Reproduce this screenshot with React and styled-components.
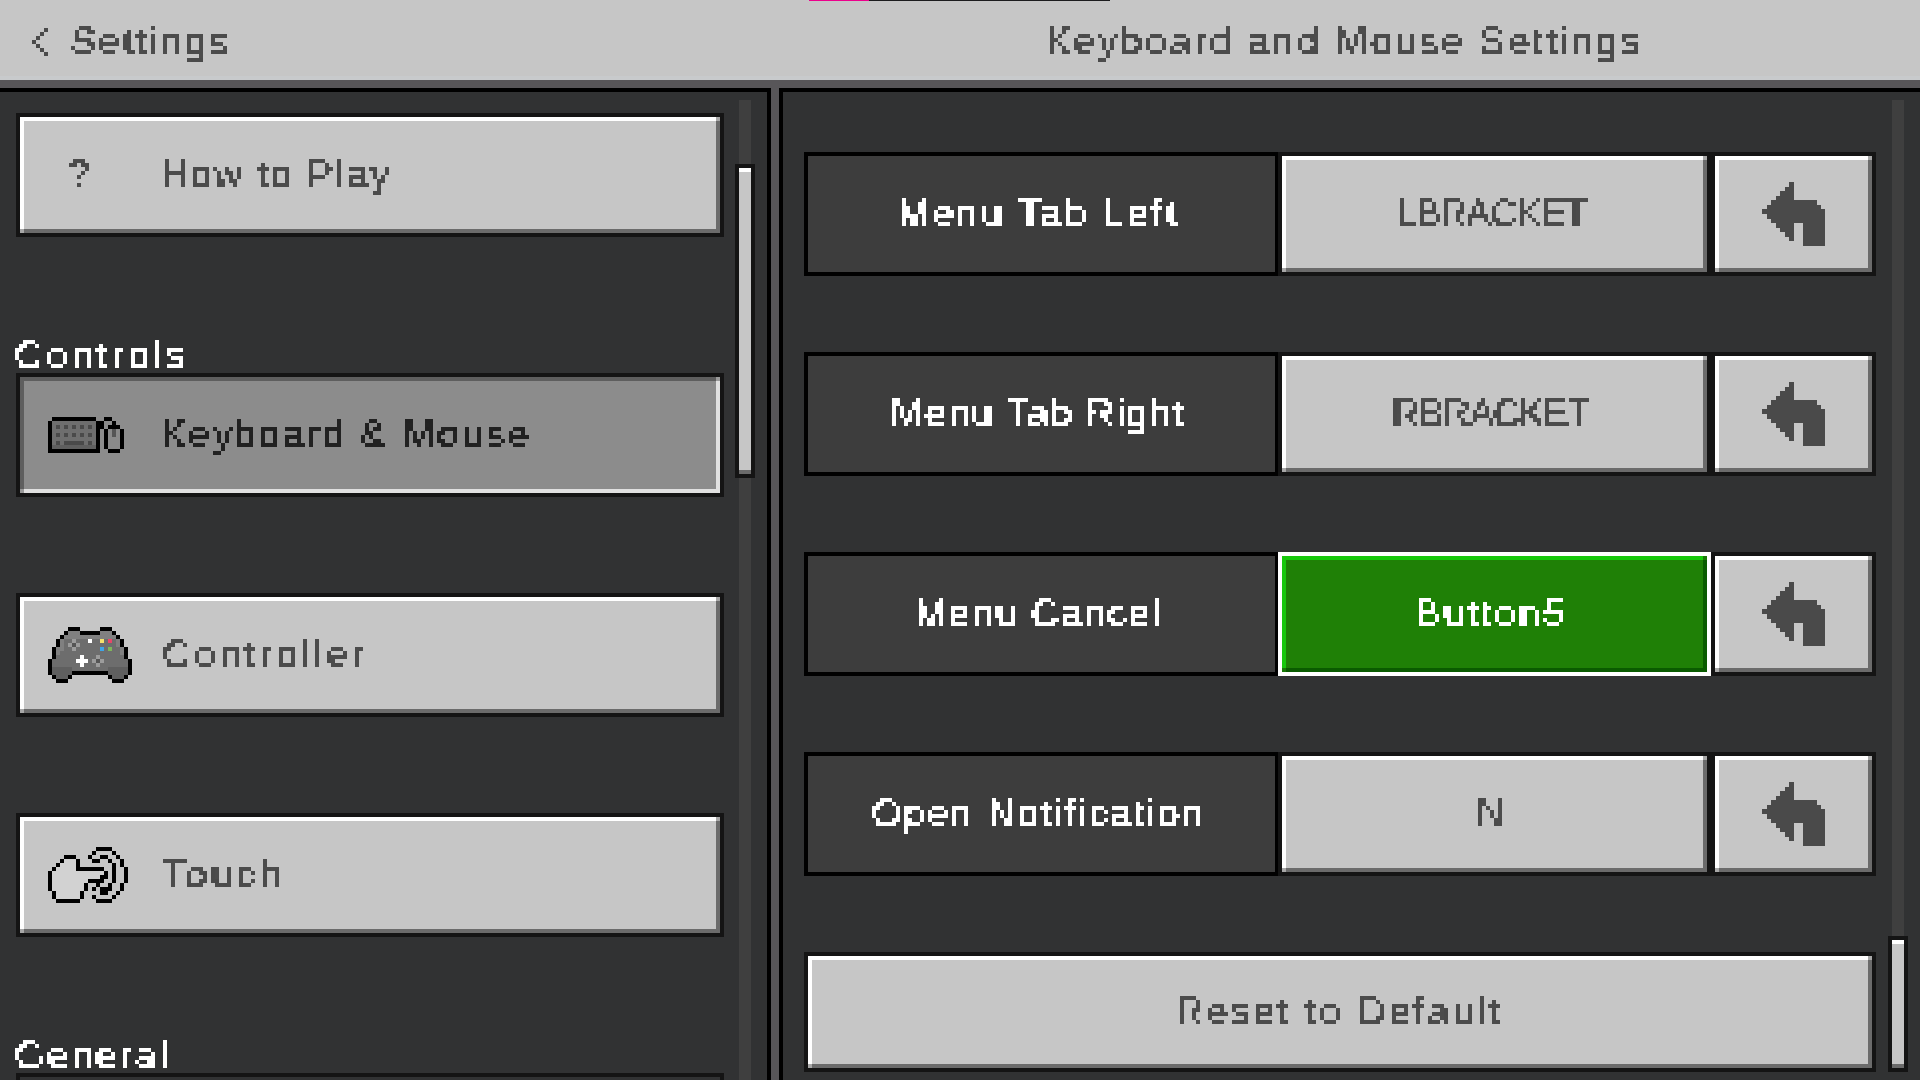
import React from 'react';
import styled, { createGlobalStyle, css } from 'styled-components';

const GlobalStyle = createGlobalStyle`
    html, body {
        margin: 0;
        padding: 0;
        width: 1920px;
        height: 1080px;
        overflow: hidden;
        background: #313233;
    }
    * {
        box-sizing: border-box;
    }
`;

const tones = {
    stone: { fill: '#c6c6c6', high: '#ffffff', low: '#6b6b6b', corner: '#a8a8a8', text: '#4c4c4c' },
    pressed: { fill: '#8c8c8c', high: '#5e5e5e', low: '#e0e0e0', corner: '#9a9a9a', text: '#222222' },
    green: { fill: '#1f8006', high: '#17c80b', low: '#0a5b00', corner: '#197a07', text: '#ffffff' }
};

const bevel = css`
    position: relative;
    background: ${props => tones[props.$tone || 'stone'].fill};
    box-shadow:
        inset 4px 4px 0 ${props => tones[props.$tone || 'stone'].high},
        inset -4px -4px 0 ${props => tones[props.$tone || 'stone'].low};
    &::before,
    &::after {
        content: '';
        position: absolute;
        width: 4px;
        height: 4px;
        background: ${props => tones[props.$tone || 'stone'].corner};
    }
    &::before {
        left: 0;
        bottom: 0;
    }
    &::after {
        right: 0;
        top: 0;
    }
`;

const Page = styled.div`
    position: relative;
    width: 1920px;
    height: 1080px;
    display: flex;
    flex-direction: column;
    overflow: hidden;
`;

const Progress = styled.div`
    position: absolute;
    top: 0;
    left: 809px;
    width: 301px;
    height: 1px;
    background: linear-gradient(to right, #ec008c 60px, #1c1c1e 60px);
`;

const Header = styled.header`
    height: 88px;
    flex: none;
    display: flex;
    padding-top: 3px;
    background: #c6c6c6;
    border-bottom: 8px solid #585659;
    box-shadow: inset 0 -4px 0 #c8cacc;
`;

const BackLink = styled.div`
    width: 768px;
    padding-left: 32px;
    display: flex;
    align-items: center;
    gap: 22px;
`;

const HeaderTitle = styled.div`
    flex: 1;
    display: flex;
    align-items: center;
    justify-content: center;
`;

const Body = styled.main`
    flex: 1;
    min-height: 0;
    display: flex;
    gap: 8px;
    background: #585659;
`;

const LeftPane = styled.section`
    width: 771px;
    flex: none;
    display: flex;
    padding: 8px 0 0 16px;
    background: #313233;
    border-top: 4px solid #000;
    border-right: 4px solid #000;
    overflow: hidden;
`;

const RightPane = styled.section`
    flex: 1;
    display: flex;
    padding: 8px 12px 0 21px;
    background: #313233;
    border-top: 4px solid #000;
    border-left: 4px solid #000;
    overflow: hidden;
`;

const MenuList = styled.div`
    width: 708px;
    flex: none;
    margin-top: 13px;
    display: flex;
    flex-direction: column;
    gap: 96px;
`;

const MenuGroup = styled.div`
    display: flex;
    flex-direction: column;
`;

const GroupTitle = styled.div`
    height: 40px;
    padding-top: 6px;
    margin-left: -2px;
    display: flex;
    align-items: center;
    flex: none;
`;

const MenuButton = styled.div`
    height: 124px;
    flex: none;
    border: 4px solid #141414;
    display: flex;
`;

const MenuFace = styled.div`
    ${bevel}
    flex: 1;
    display: flex;
    align-items: center;
    padding-left: 28px;
`;

const IconSlot = styled.div`
    width: ${props => props.$width || 112}px;
    flex: none;
    display: flex;
    align-items: center;
`;

const QuestionMark = styled.div`
    margin-left: 20px;
`;

const Track = styled.div`
    position: relative;
    width: 12px;
    flex: none;
    background: #3f3f3f;
    margin-left: ${props => props.$gap}px;
    height: ${props => props.$height};
`;

const Thumb = styled.div`
    position: absolute;
    left: -4px;
    width: 20px;
    top: ${props => props.$top}px;
    height: ${props => props.$size}px;
    border: 4px solid #141414;
    background: #c6c6c6;
    box-shadow:
        inset 0 4px 0 #ffffff,
        inset 0 -4px 0 #6b6b6b;
`;

const BindingList = styled.div`
    width: 1072px;
    flex: none;
    margin-top: 52px;
    display: flex;
    flex-direction: column;
    gap: 76px;
`;

const BindingRow = styled.div`
    height: 124px;
    display: flex;
`;

const BindingName = styled.div`
    width: 475px;
    flex: none;
    padding-right: 7px;
    background: #3d3d3d;
    border: 4px solid #000;
    display: flex;
    align-items: center;
    justify-content: center;
`;

const KeyFrame = styled.div`
    position: relative;
    width: 433px;
    margin-left: -1px;
    flex: none;
    display: flex;
    border: 4px solid ${props => (props.$active ? '#ffffff' : '#141414')};
`;

const BackFrame = styled.div`
    width: 165px;
    flex: none;
    display: flex;
    border: 4px solid #141414;
`;

const Face = styled.div`
    ${bevel}
    flex: 1;
    display: flex;
    align-items: center;
    justify-content: center;
    padding-right: ${props => props.$nudge || 0}px;
`;

const ResetFrame = styled.div`
    height: 120px;
    flex: none;
    display: flex;
    border: 4px solid #141414;
`;

const PixelText = styled.span`
    display: inline-block;
    margin-top: -2px;
    font-family: "Liberation Sans", Arial, sans-serif;
    font-size: 38px;
    line-height: 48px;
    letter-spacing: ${props => props.$spacing}px;
    -webkit-text-stroke: 0.45px ${props => props.$color || '#4c4c4c'};
    white-space: pre;
    color: ${props => props.$color || '#4c4c4c'};
    filter: url(#pixelate);
`;

const FilterDefs = styled.svg`
    position: absolute;
    width: 0;
    height: 0;
`;

const PixelSvg = styled.svg`
    display: block;
    flex: none;
    shape-rendering: crispEdges;
`;

const palette = {
    K: '#000000',
    g: '#6e6e6e',
    d: '#4a4a4a',
    D: '#5f5f5f',
    m: '#8a8a8a',
    l: '#808080',
    f: '#6d6d6d',
    s: '#5f5f5f',
    e: '#9c9c9c',
    c: '#555555',
    W: '#ffffff',
    Y: '#f5e26b',
    R: '#e8476a',
    B: '#3ea6e8',
    G: '#7fb65a',
    h: '#d2d2d2',
    A: '#4a4a4a'
};

// draws a list of same length strings as a pixel map, one char per cell
const PixelIcon = ({ rows, cell = 4 }) => {
    const cols = rows[0].length;
    return (
        <PixelSvg
            width={cols * cell}
            height={rows.length * cell}
            viewBox={`0 0 ${cols} ${rows.length}`}
        >
            {rows.map((row, y) =>
                row.split('').map((ch, x) =>
                    palette[ch] ? (
                        <rect key={`${x}-${y}`} x={x} y={y} width="1.02" height="1.02" fill={palette[ch]} />
                    ) : null
                )
            )}
        </PixelSvg>
    );
};

const chevron = [
    '...A',
    '..A.',
    '.A..',
    'A...',
    '.A..',
    '..A.',
    '...A'
];

const keyboardMouse = [
    '.KKKKKKKKKKK..KK...',
    'KgggggggggggKK..K..',
    'KgdgdgdgdgdgKK.KKK.',
    'KgggggggggggK.KmcmK',
    'KgdgdgdgdgdgK.KmcmK',
    'KgggggggggggK.KmmmK',
    'KgdgdddddgdgK.KmmmK',
    'KDDDDDDDDDDDK.KmmmK',
    'KKKKKKKKKKKKK..KKK.'
];

const gamepad = [
    '.....KKK.....KKK.....',
    '....KlllKKKKKlllK....',
    '...KlllllllllllllK...',
    '..KlffefffWffYfRflK..',
    '..Klfece' + 'f'.repeat(9) + 'lK..',
    '.KllffeffffffBfGfflK.',
    '.Kl' + 'f'.repeat(15) + 'lK.',
    '.KffffffWfffeffffffK.',
    'KffffffWWWfeceffffffK',
    'KfffffffWfffefffffffK',
    'KsssssfffffffffsssssK',
    'KsssssKKKKKKKKKsssssK',
    '.KsssK.........KsssK.',
    '..KKK...........KKK..'
];

const touchHand = [
    '............KKKK....',
    '...........K....K...',
    '....KKK...K..KK..K..',
    '...KhhhK...KK..K..K.',
    '..KhhhhK........K.K.',
    '.KhhhhhKKKKKKK..K..K',
    'KhhhhhhhhhhhhhK.K..K',
    'KhhhhhhhhhhhhKK.K..K',
    'KhhhhhhhhhKKKK..K..K',
    'KhhhhhhhhK..K..K..K.',
    'KhhhhhhhhK.K.KKK..K.',
    '.KhhhhhhK....KK..K..',
    '.KhhhhhhK..K....K...',
    '..KKKKKK....KKKK....'
];

const undoArrow = [
    '......A.......',
    '.....AA.......',
    '....AAA.......',
    '...AAAA.......',
    '..AAAAAAAAAA..',
    '.AAAAAAAAAAAA.',
    'AAAAAAAAAAAAAA',
    '.AAAAAAAAAAAAA',
    '..AAAAAAAAAAAA',
    '...AAAA..AAAAA',
    '....AAA..AAAAA',
    '.....AA..AAAAA',
    '......A..AAAAA',
    '.........AAAAA'
];

// spacing is tuned per label, the source font is wider on lower case than on capitals
const bindings = [
    { name: 'Menu Tab Left', nameSpacing: 3.2, key: 'LBRACKET', keySpacing: -1.2 },
    { name: 'Menu Tab Right', nameSpacing: 2.1, key: 'RBRACKET', keySpacing: -1.2 },
    { name: 'Menu Cancel', nameSpacing: 2.2, key: 'Button5', keySpacing: 3.1, active: true },
    { name: 'Open Notification', nameSpacing: 2.5, key: 'N', keySpacing: 0 }
];

const App = () => (
    <Page>
        <GlobalStyle />
        <FilterDefs aria-hidden="true">
            <filter id="pixelate" x="0" y="0" width="1" height="1" colorInterpolationFilters="sRGB">
                <feFlood x="2" y="2" width="1" height="1" floodColor="#000" />
                <feComposite width="4" height="4" />
                <feTile result="grid" />
                <feComposite in="SourceGraphic" in2="grid" operator="in" />
                <feComponentTransfer>
                    <feFuncA type="discrete" tableValues="0 1 1" />
                </feComponentTransfer>
                <feMorphology operator="dilate" radius="1" result="dot" />
                <feOffset in="dot" dx="1" dy="0" result="right" />
                <feOffset in="dot" dx="0" dy="1" result="down" />
                <feOffset in="dot" dx="1" dy="1" result="both" />
                <feMerge>
                    <feMergeNode in="dot" />
                    <feMergeNode in="right" />
                    <feMergeNode in="down" />
                    <feMergeNode in="both" />
                </feMerge>
            </filter>
        </FilterDefs>
        <Progress />
        <Header>
            <BackLink>
                <PixelIcon rows={chevron} />
                <PixelText $spacing={2.8}>Settings</PixelText>
            </BackLink>
            <HeaderTitle>
                <PixelText $spacing={3.3}>Keyboard and Mouse Settings</PixelText>
            </HeaderTitle>
        </Header>
        <Body>
            <LeftPane>
                <MenuList>
                    <MenuButton>
                        <MenuFace>
                            <IconSlot>
                                <QuestionMark>
                                    <PixelText $spacing={0}>?</PixelText>
                                </QuestionMark>
                            </IconSlot>
                            <PixelText $spacing={2.6}>How to Play</PixelText>
                        </MenuFace>
                    </MenuButton>
                    <MenuGroup>
                        <GroupTitle>
                            <PixelText $color="#ffffff" $spacing={4.2}>Controls</PixelText>
                        </GroupTitle>
                        <MenuButton>
                            <MenuFace $tone="pressed">
                                <IconSlot>
                                    <PixelIcon rows={keyboardMouse} />
                                </IconSlot>
                                <PixelText $color="#222222" $spacing={3}>Keyboard &amp; Mouse</PixelText>
                            </MenuFace>
                        </MenuButton>
                    </MenuGroup>
                    <MenuButton>
                        <MenuFace>
                            <IconSlot $width={114}>
                                <PixelIcon rows={gamepad} />
                            </IconSlot>
                            <PixelText $spacing={4.2}>Controller</PixelText>
                        </MenuFace>
                    </MenuButton>
                    <MenuButton>
                        <MenuFace>
                            <IconSlot $width={114}>
                                <PixelIcon rows={touchHand} />
                            </IconSlot>
                            <PixelText $spacing={4.1}>Touch</PixelText>
                        </MenuFace>
                    </MenuButton>
                    <MenuGroup>
                        <GroupTitle>
                            <PixelText $color="#ffffff" $spacing={3}>General</PixelText>
                        </GroupTitle>
                        <MenuButton />
                    </MenuGroup>
                </MenuList>
                <Track $gap={15} $height="100%">
                    <Thumb $top={64} $size={314} />
                </Track>
            </LeftPane>
            <RightPane>
                <BindingList>
                    {bindings.map(item => (
                        <BindingRow key={item.name}>
                            <BindingName>
                                <PixelText $color="#ffffff" $spacing={item.nameSpacing}>{item.name}</PixelText>
                            </BindingName>
                            <KeyFrame $active={item.active}>
                                <Face $tone={item.active ? 'green' : 'stone'} $nudge={8}>
                                    <PixelText $color={item.active ? '#ffffff' : '#4c4c4c'} $spacing={item.keySpacing}>
                                        {item.key}
                                    </PixelText>
                                </Face>
                            </KeyFrame>
                            <BackFrame>
                                <Face>
                                    <PixelIcon rows={undoArrow} cell={4.57} />
                                </Face>
                            </BackFrame>
                        </BindingRow>
                    ))}
                    <ResetFrame>
                        <Face $nudge={3}>
                            <PixelText $spacing={3.4}>Reset to Default</PixelText>
                        </Face>
                    </ResetFrame>
                </BindingList>
                <Track $gap={16} $height="972px">
                    <Thumb $top={836} $size={136} />
                </Track>
            </RightPane>
        </Body>
    </Page>
);

export default App;
